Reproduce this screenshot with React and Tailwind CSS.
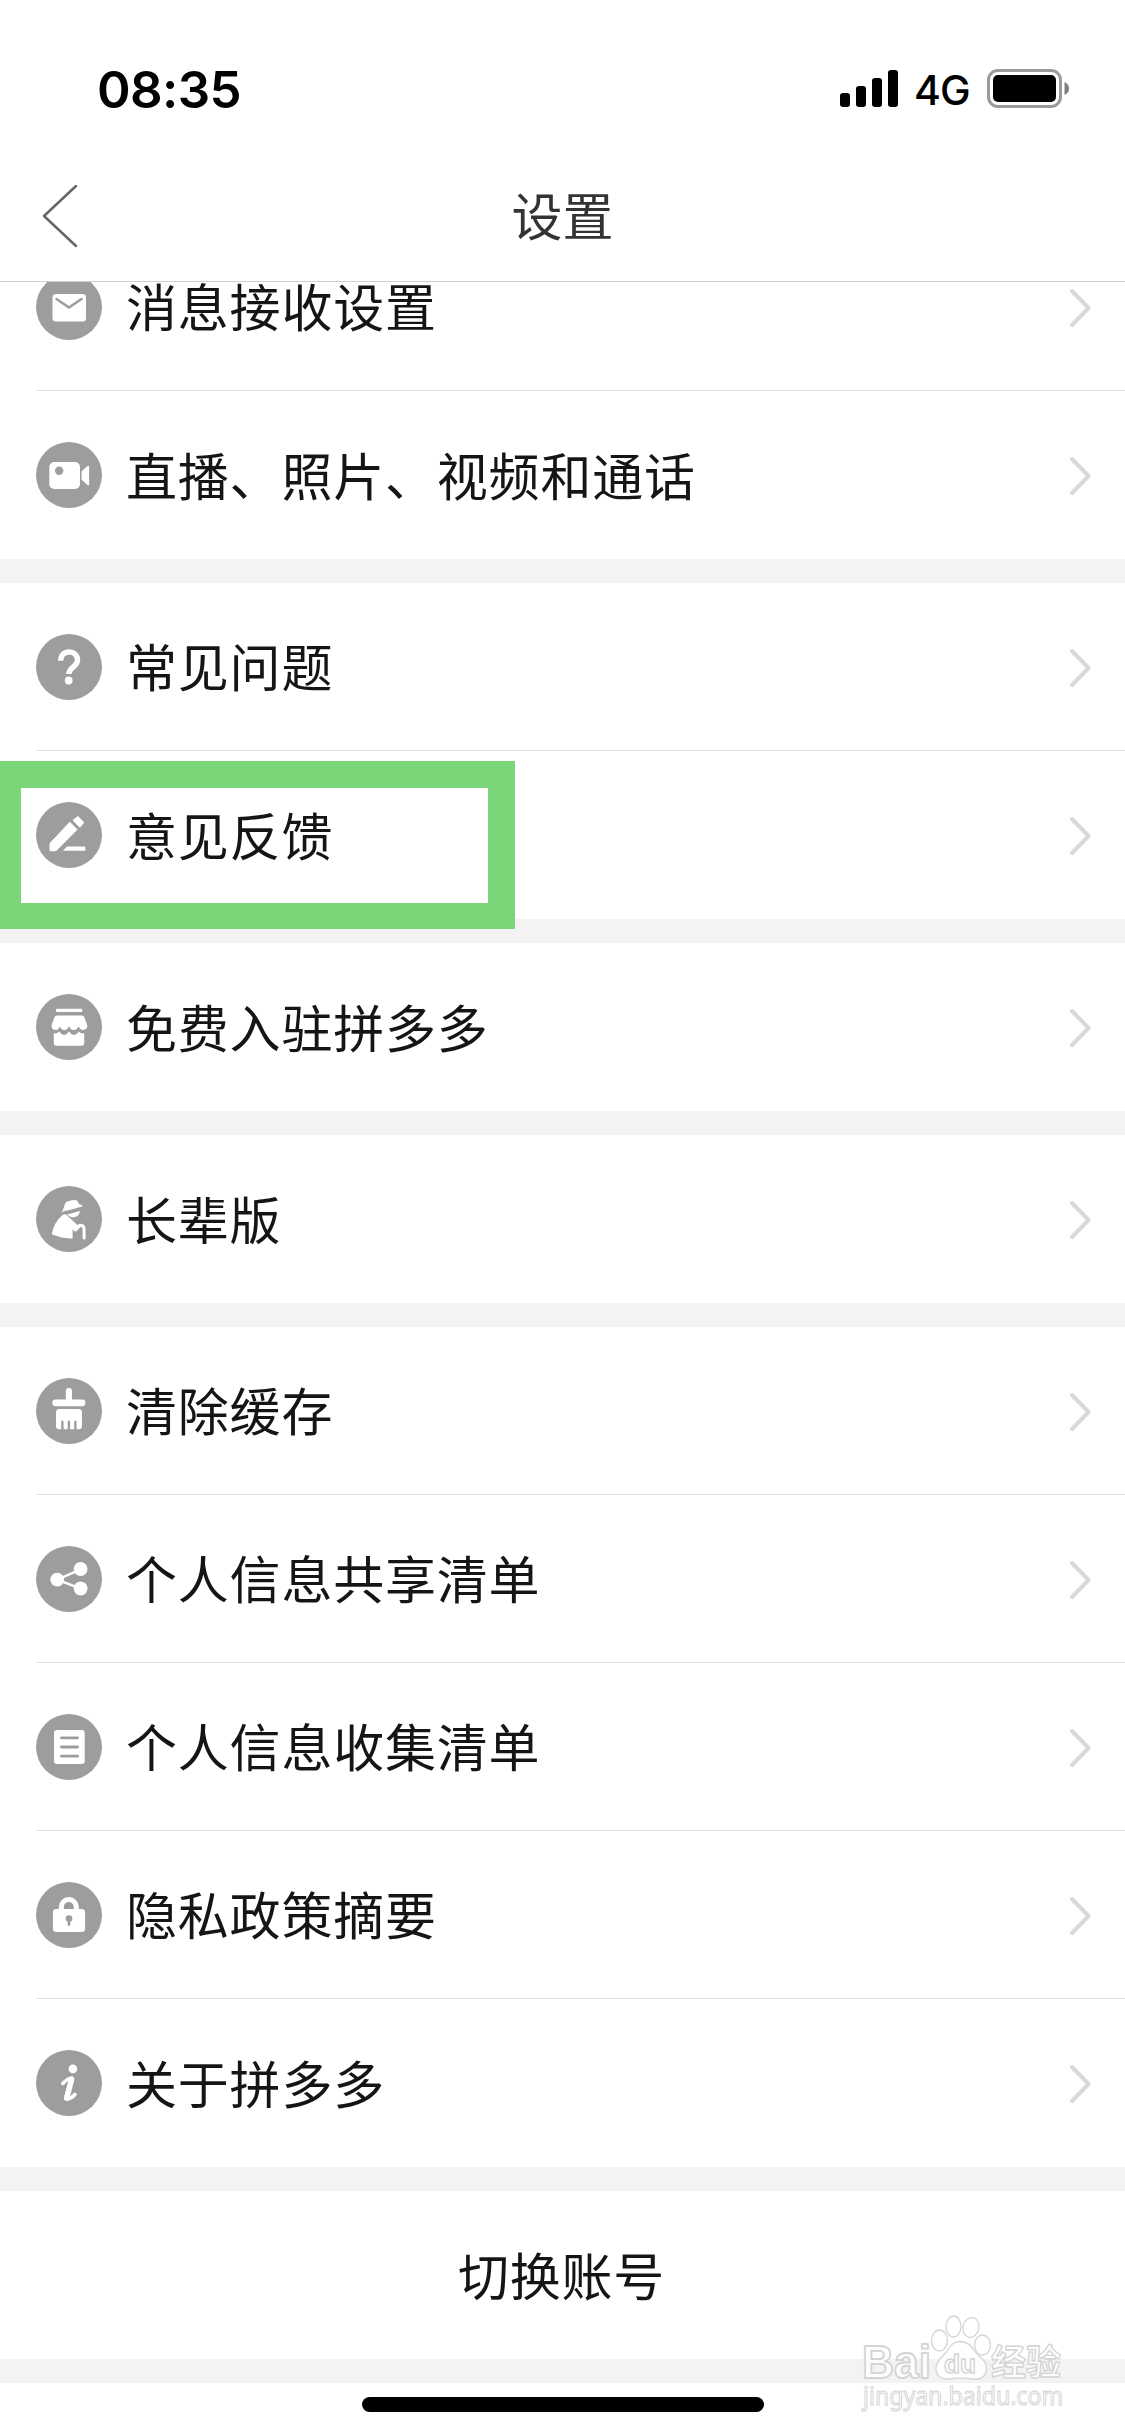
const iconShapes = {
  mail: (
    <>
      <rect x="16.5" y="20" width="33.5" height="27.5" rx="3.5" fill="#fff" />
      <path d="M20.5 25l12.5 8.5 12.5-8.5" fill="none" stroke="#9d9d9d" strokeWidth="2.6" strokeLinecap="round" />
    </>
  ),
  video: (
    <>
      <rect x="13.3" y="20" width="30.7" height="27" rx="5" fill="#fff" />
      <circle cx="23.2" cy="28.8" r="4.2" fill="#9d9d9d" />
      <path d="M45.5 30.5q0-1 .8-1.8l4.9-4.4q1.9-1.4 1.9.8v16.8q0 2.2-1.9.8l-4.9-4.4q-.8-.8-.8-1.8z" fill="#fff" />
    </>
  ),
  question: (
    <>
      <path d="M24.7 26.8C24.7 21 28.3 18 33.1 18s8.4 3.2 8.4 8.2c0 6.6-8.6 6.8-8.6 13.8" fill="none" stroke="#fff" strokeWidth="5.4" />
      <circle cx="32.7" cy="46.5" r="3.9" fill="#fff" />
    </>
  ),
  pen: (
    <g fill="#fff">
      <path d="M33.8 20.3l7.2 7.2-21 21.2h-6v-7.4z" stroke="#fff" strokeLinejoin="round" />
      <path d="M41.7 15.3l5.2 5.2-3.1 3.8-5.8-6z" stroke="#fff" strokeWidth="2" strokeLinejoin="round" />
      <path d="M31 44.6h17.5q.8 0 .8.8v3.3H27z" />
    </g>
  ),
  shop: (
    <g fill="#fff">
      <rect x="20" y="14.7" width="26.3" height="3.4" rx="1" />
      <path d="M20.500 21.500h25.500q1.600 0 2.200 1.500l3 8q.6 4.800-4.200 4.900-3 0-4.400-3.700-1.300 3.700-4.800 3.700t-4.800-3.700q-1.300 3.700-4.800 3.700t-4.200-3.700q-1.300 3.700-4.200 3.700-4.400-.1-4.200-4.900l3-8q.6-1.500 2.500-1.500z" />
      <path d="M17.8 39.500q3.700.4 5.400-2 2.500 3.700 5 3.400 2.800-.2 4.800-3.400 2 3.200 4.800 3.400 2.500.3 5-3.400 1.700 2.400 5.400 2V49q0 2.700-2.700 2.700h-25Q17.800 51.700 17.800 49z" />
    </g>
  ),
  elder: (
    <>
      <g fill="#fff">
        <path d="M25.300 26q2-1.300 2.800-5.500 1.200-5.300 4.500-5.200 5.400-2.200 8.500-.8l2 3.600 4.200 1.800-9 2.900z" />
        <path d="M31 28.600l13-3.500q-.6 5.200-6 6.200-3.700.3-7-2.700z" />
        <path d="M26 29.600q2.800-2.400 5-.4l13.200 12.600-3.500 2.400-4.100-1.200v9.500q-11.200 0-20.800-4.200 1.800-11.600 10.200-18.900z" />
      </g>
      <path d="M37.500 41.500q1.700 4 3.300 1.200 1-3.500 4-3.500 3.300.2 3.300 4V52" fill="none" stroke="#fff" strokeWidth="3" strokeLinecap="round" />
    </>
  ),
  broom: (
    <>
      <g fill="#fff">
        <rect x="29.8" y="10" width="6.2" height="15" rx="3" />
        <rect x="16.4" y="21.400" width="33" height="6.8" rx="3.2" />
        <path d="M20 34.500q0-3.400 3.400-3.400h19.200q3.400 0 3.400 3.400V48q0 3.300-3.400 3.300H23q-3 0-3-3z" />
      </g>
      <path d="M26.400 51.500v-7.800M32.900 51.500v-7.800M39.400 51.500v-7.800" stroke="#9d9d9d" strokeWidth="2.4" strokeLinecap="round" />
    </>
  ),
  share: (
    <>
      <path d="M44.600 23.300L21.200 33.600l23.400 9" fill="none" stroke="#fff" strokeWidth="2.4" />
      <g fill="#fff">
        <circle cx="21.2" cy="33.6" r="6.9" />
        <circle cx="44.6" cy="23" r="6.9" />
        <circle cx="44.6" cy="42.5" r="6.9" />
      </g>
    </>
  ),
  list: (
    <>
      <rect x="18" y="16" width="30.7" height="34" rx="3" fill="#fff" />
      <path d="M25.400 23.800h16.200M25.400 33h16.200M25.400 42.200h16.200" stroke="#9d9d9d" strokeWidth="2.8" strokeLinecap="round" />
    </>
  ),
  lock: (
    <>
      <rect x="16.9" y="27" width="32.2" height="23" rx="3.5" fill="#fff" />
      <path d="M25.300 29v-4a7.500 7.500 0 0 1 15 0v4" fill="none" stroke="#fff" strokeWidth="5" />
      <circle cx="33" cy="36.6" r="3.4" fill="#9d9d9d" />
      <path d="M33 37v5.600" stroke="#9d9d9d" strokeWidth="2.6" strokeLinecap="round" />
    </>
  ),
  info: (
    <>
      <circle cx="36.9" cy="18.8" r="4.4" fill="#fff" />
      <path d="M26.800 33.500Q32 28 36 28L30 47q-.8 3 2.200 2 4-1.200 6.800-4.500" fill="none" stroke="#fff" strokeWidth="3.6" strokeLinecap="round" strokeLinejoin="round" />
      <path d="M35.500 29.500L30.800 48" stroke="#fff" strokeWidth="5.5" strokeLinecap="round" />
    </>
  ),
}

const groups = [
  [
    { icon: 'mail', label: '消息接收设置' },
    { icon: 'video', label: '直播、照片、视频和通话' },
  ],
  [
    { icon: 'question', label: '常见问题' },
    { icon: 'pen', label: '意见反馈', marked: true },
  ],
  [{ icon: 'shop', label: '免费入驻拼多多' }],
  [{ icon: 'elder', label: '长辈版' }],
  [
    { icon: 'broom', label: '清除缓存' },
    { icon: 'share', label: '个人信息共享清单' },
    { icon: 'list', label: '个人信息收集清单' },
    { icon: 'lock', label: '隐私政策摘要' },
    { icon: 'info', label: '关于拼多多' },
  ],
]

function StatusBar() {
  return (
    <div className="flex h-[132px] items-start justify-between pl-[97px] pr-[56px] pt-[69px] font-['Inter',sans-serif] text-black">
      <span className="text-[51px] font-semibold leading-[41px] tracking-[-0.6px]">08:35</span>
      <div className="flex items-start">
        <div className="flex h-[38px] items-end gap-[6px]">
          <span className="h-[14px] w-[10px] rounded-[3px] bg-black" />
          <span className="h-[21px] w-[10px] rounded-[3px] bg-black" />
          <span className="h-[29px] w-[10px] rounded-[3px] bg-black" />
          <span className="h-[37px] w-[10px] rounded-[3px] bg-black" />
        </div>
        <span className="ml-[16px] mt-[1px] w-[57px] text-[41px] font-medium leading-[41px] tracking-[-1px]">4G</span>
        <svg className="ml-[16px]" width="82" height="39" viewBox="0 0 82 39">
          <rect x="1.5" y="1.5" width="72" height="36" rx="9.5" fill="none" stroke="#9a9a9a" strokeWidth="3" />
          <rect x="6" y="6" width="63" height="27" rx="5" fill="#000" />
          <path d="M77.500 13q4.500 2 4.500 6.500T77.500 26z" fill="#808080" />
        </svg>
      </div>
    </div>
  )
}

function Header() {
  return (
    <header className="flex h-[150px] items-center border-b border-[#cfcfcf] px-[40px] pt-[18px]">
      <svg width="40" height="64" viewBox="0 0 40 64" fill="none" stroke="#666" strokeWidth="2.5" strokeLinecap="round" strokeLinejoin="round">
        <path d="M36 2L4 32l32 30" />
      </svg>
      <h1 className="-mt-[3px] flex-1 pr-[40px] text-center text-[51px] leading-[60px] text-[#333]">设置</h1>
    </header>
  )
}

function Row({ item, last }) {
  return (
    <div className="relative h-[168px] shrink-0 pl-[36px]">
      <div className={`flex h-full items-center pr-[33px] ${last ? '' : 'border-b border-[#e2e2e2]'}`}>
        <svg className="shrink-0" width="66" height="66" viewBox="0 0 66 66">
          <circle cx="33" cy="33" r="33" fill="#9d9d9d" />
          {iconShapes[item.icon]}
        </svg>
        <span className="-mt-[3px] ml-[24px] flex-1 text-[51px] leading-[50px] tracking-[0.8px]">{item.label}</span>
        <svg className="mt-[2px]" width="24" height="40" viewBox="0 0 24 40" fill="none" stroke="#d8d8d8" strokeWidth="4" strokeLinecap="round" strokeLinejoin="round">
          <path d="M4 3l16.500 17L4 37" />
        </svg>
      </div>
      {item.marked && (
        <div className="absolute left-0 top-[10px] h-[168px] w-[515px] border-b-[26px] border-l-[21px] border-r-[27px] border-t-[27px] border-[#7bd679]" />
      )}
    </div>
  )
}

function Watermark() {
  return (
    <svg className="absolute bottom-[16px] right-[45px]" width="230" height="120" viewBox="0 0 230 120" fill="#fff" fillOpacity="0.85" stroke="#d4d4d4" strokeWidth="1.3">
      <ellipse cx="89.5" cy="40.5" rx="8" ry="10.5" />
      <ellipse cx="103.5" cy="26.5" rx="7.5" ry="10.5" />
      <ellipse cx="121" cy="27.5" rx="8" ry="10" transform="rotate(12 121 27.5)" />
      <ellipse cx="132.5" cy="45" rx="8" ry="10" />
      <path d="M110 41.500c7 0 11 4 14 9 4 6 12.500 9 12.500 18 0 8-6 11.500-13 10.500-9-1.200-17-1.200-25 0-7 .8-12.500-3-12.500-10.500 0-9 8-12 11.500-18 3-5 6-9 12.500-9z" />
      <g className="font-['Liberation_Sans',sans-serif] font-bold">
        <text x="12" y="78" fontSize="46" strokeWidth="1.8" textLength="69" lengthAdjust="spacingAndGlyphs">Bai</text>
        <text x="94" y="73" fontSize="25" textLength="32" lengthAdjust="spacingAndGlyphs">du</text>
      </g>
      <text x="141" y="75" fontSize="35" textLength="70" className="font-['Noto_Sans_CJK_SC',sans-serif] font-bold">经验</text>
      <text x="13" y="105" fontSize="25" textLength="200" lengthAdjust="spacingAndGlyphs" strokeWidth="1" className="font-['Noto_Sans',sans-serif]">jingyan.baidu.com</text>
    </svg>
  )
}

export default function App() {
  return (
    <div className="relative flex h-[2436px] w-[1125px] flex-col overflow-hidden bg-white font-['Noto_Sans_CJK_SC',sans-serif] text-[#151516]">
      <StatusBar />
      <Header />
      {/* list is scrolled, the first row sits partly under the header */}
      <main className="flex h-[2154px] flex-col justify-end overflow-hidden">
        {groups.map((group, i) => (
          <section key={i} className="shrink-0 border-b-[24px] border-[#f3f3f3]">
            {group.map((item, j) => (
              <Row key={item.label} item={item} last={j === group.length - 1} />
            ))}
          </section>
        ))}
        <button className="h-[168px] shrink-0 pb-[3px] pr-[2px] text-center text-[51px] leading-[60px] tracking-[0.8px]">切换账号</button>
        <div className="flex h-[77px] shrink-0 justify-center border-t-[24px] border-[#f3f3f3] pt-[14px]">
          <div className="h-[15px] w-[402px] rounded-full bg-black" />
        </div>
      </main>
      <Watermark />
    </div>
  )
}
